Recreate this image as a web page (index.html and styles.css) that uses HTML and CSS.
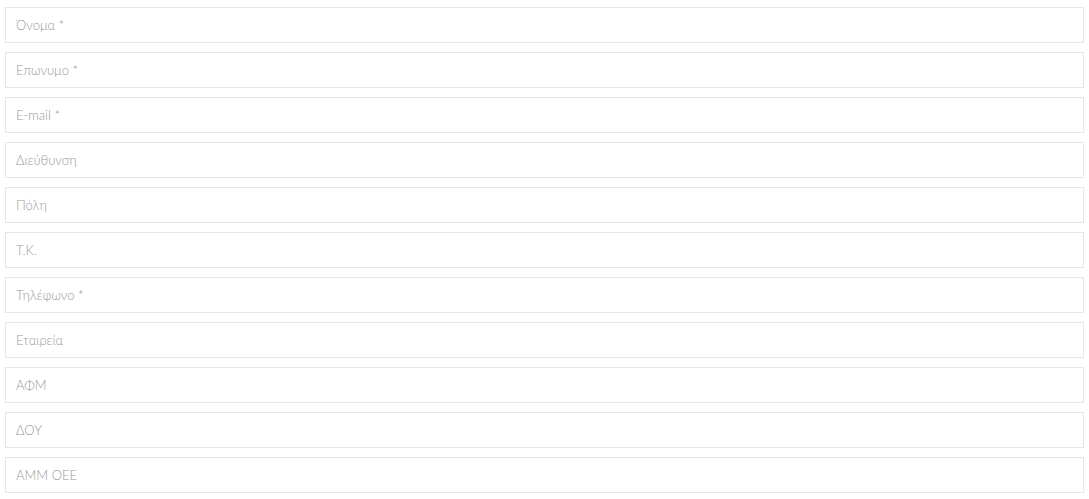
FILE: index.html
```html
<!DOCTYPE html>
<html>
<head>
  <title>Φόρμα στοιχείων</title>
  <link rel="stylesheet" href="styles.css">
</head>
<body>
  <form class="details-form">
    <input type="text" class="field" name="first_name" placeholder="Όνομα *">
    <input type="text" class="field" name="last_name" placeholder="Επωνυμο *">
    <input type="text" class="field" name="email" placeholder="E-mail *">
    <input type="text" class="field" name="address" placeholder="Διεύθυνση">
    <input type="text" class="field" name="city" placeholder="Πόλη">
    <input type="text" class="field" name="postcode" placeholder="Τ.Κ.">
    <input type="text" class="field" name="phone" placeholder="Τηλέφωνο *">
    <input type="text" class="field" name="company" placeholder="Εταιρεία">
    <input type="text" class="field" name="vat" placeholder="ΑΦΜ">
    <input type="text" class="field" name="tax_office" placeholder="ΔΟΥ">
    <input type="text" class="field" name="amm" placeholder="ΑΜΜ ΟΕΕ">
  </form>
</body>
</html>
```

FILE: styles.css
```css
/* form layout */
body {
  margin: 0;
  background-color: #fff;
}

.details-form {
  display: flex;
  flex-direction: column;
  gap: 9px;
  padding: 7px 5px;
}

.field {
  box-sizing: border-box;
  width: 100%;
  height: 36px;
  margin: 0;
  padding: 0 10px;
  border: 1px solid #e6e6e6;
  background-color: #fff;
  font-family: Lato, "Noto Sans", sans-serif;
  font-weight: 300;
  font-size: 13px;
  color: #555;
  outline: none;
}

.field::placeholder {
  color: #999;
  opacity: 1;
}
```
